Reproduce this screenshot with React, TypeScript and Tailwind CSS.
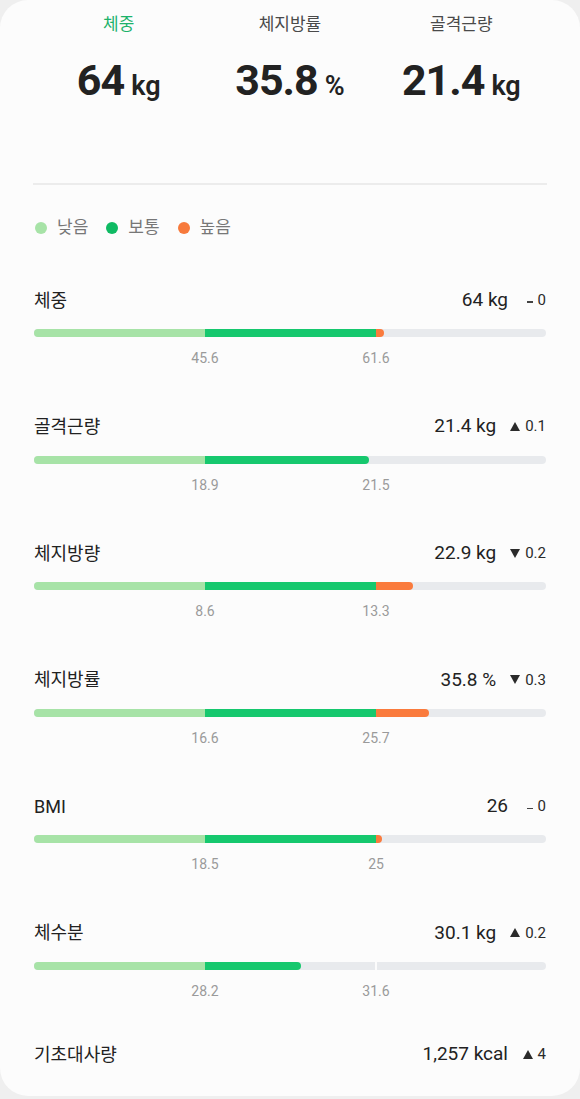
interface Metric {
  label: string
  value: string
  trend: 'up' | 'down' | 'flat'
  delta: string
  low: string
  high: string
  green?: number
  orange?: number
  split?: boolean
}

const metrics: Metric[] = [
  { label: '체중', value: '64 kg', trend: 'flat', delta: '0', low: '45.6', high: '61.6', green: 171, orange: 8 },
  { label: '골격근량', value: '21.4 kg', trend: 'up', delta: '0.1', low: '18.9', high: '21.5', green: 164 },
  { label: '체지방량', value: '22.9 kg', trend: 'down', delta: '0.2', low: '8.6', high: '13.3', green: 171, orange: 37 },
  { label: '체지방률', value: '35.8 %', trend: 'down', delta: '0.3', low: '16.6', high: '25.7', green: 171, orange: 53 },
  { label: 'BMI', value: '26', trend: 'flat', delta: '0', low: '18.5', high: '25', green: 171, orange: 6 },
  { label: '체수분', value: '30.1 kg', trend: 'up', delta: '0.2', low: '28.2', high: '31.6', green: 96, split: true },
]

const font = { fontFamily: "Roboto, 'Noto Sans CJK KR', sans-serif" }

function Delta({ trend, delta }: { trend: Metric['trend']; delta: string }) {
  return (
    <span className="flex items-center gap-[5px] text-[15px] text-[#2a2a2a] min-w-[24px] justify-end">
      {trend === 'flat' && <span className="block w-[6px] h-[1.5px] bg-[#444] mt-[4px]" />}
      {trend === 'up' && (
        <svg width="10" height="9" viewBox="0 0 10 9">
          <path d="M5 0 L10 9 L0 9 Z" fill="#2a2a2a" />
        </svg>
      )}
      {trend === 'down' && (
        <svg width="10" height="9" viewBox="0 0 10 9">
          <path d="M0 0 L10 0 L5 9 Z" fill="#2a2a2a" />
        </svg>
      )}
      <span>{delta}</span>
    </span>
  )
}

function MetricRow({ m }: { m: Metric }) {
  const last = m.orange ? 'orange' : 'green'
  return (
    <div className="mb-[44.6px]">
      <div className="flex items-center justify-between h-[28px]">
        <span className="text-[18px] text-[#222]">{m.label}</span>
        <span className="flex items-center gap-[14px]">
          <span className="text-[19px] text-[#222]">{m.value}</span>
          <Delta trend={m.trend} delta={m.delta} />
        </span>
      </div>

      {/* bar */}
      <div className="relative mt-[15px] h-[8px] w-[512px] rounded-full bg-[#e8eaed] overflow-hidden">
        {m.split && <div className="absolute top-0 left-[341px] h-full w-[2px] bg-[#fcfcfc]" />}
        <div className="relative flex h-full">
          <div className="h-full w-[171px] bg-[#a7e3a7]" />
          <div
            className={`h-full bg-[#16c86e] ${last === 'green' ? 'rounded-r-full' : ''}`}
            style={{ width: m.green }}
          />
          {m.orange && (
            <div className="h-full rounded-r-full bg-[#fa7b3d]" style={{ width: m.orange }} />
          )}
        </div>
      </div>

      <div className="relative mt-[11px] h-[20px] w-[512px] text-[14px] text-[#9a9a9a]">
        <span className="absolute left-[171px] -translate-x-1/2 leading-[20px]">{m.low}</span>
        <span className="absolute left-[342px] -translate-x-1/2 leading-[20px]">{m.high}</span>
      </div>
    </div>
  )
}

export default function App() {
  return (
    <div className="min-h-[1099px] bg-[#efefef]" style={font}>
      <div className="min-h-[1096px] rounded-[28px] bg-[#fcfcfc] px-[34px]">
        {/* Summary */}
        <div className="grid grid-cols-3 pt-[12px] -mx-[1px]">
          {[
            { tab: '체중', num: '64', unit: 'kg', active: true },
            { tab: '체지방률', num: '35.8', unit: '%' },
            { tab: '골격근량', num: '21.4', unit: 'kg' },
          ].map((s) => (
            <div key={s.tab} className="flex flex-col items-center">
              <span className={`h-[24px] leading-[24px] text-[17px] ${s.active ? 'text-[#1db26b]' : 'text-[#4a4a4a]'}`}>
                {s.tab}
              </span>
              <span className="mt-[20px] flex items-baseline gap-[7px] text-[#222] leading-[48px]">
                <span className="text-[43px] font-bold tracking-[-1px]">{s.num}</span>
                <span className="text-[27px] font-semibold">{s.unit}</span>
              </span>
            </div>
          ))}
        </div>

        <div className="mt-[73px] h-[2px] bg-[#ececec] -mx-[1px]" />

        {/* Legend */}
        <div className="mt-[31px] flex items-center h-[24px] text-[17px] text-[#777]">
          <span className="w-[12px] h-[12px] rounded-full bg-[#a7e3a7] ml-[1px]" />
          <span className="ml-[10px]">낮음</span>
          <span className="w-[12px] h-[12px] rounded-full bg-[#0fba63] ml-[18px]" />
          <span className="ml-[10px]">보통</span>
          <span className="w-[12px] h-[12px] rounded-full bg-[#f77a3c] ml-[18px]" />
          <span className="ml-[10px]">높음</span>
        </div>

        <div className="mt-[46px]">
          {metrics.map((m) => (
            <MetricRow key={m.label} m={m} />
          ))}
          <div className="flex items-center justify-between h-[28px] -mt-[5px]">
            <span className="text-[18px] text-[#222]">기초대사량</span>
            <span className="flex items-center gap-[14px]">
              <span className="text-[19px] text-[#222]">1,257 kcal</span>
              <Delta trend="up" delta="4" />
            </span>
          </div>
        </div>
      </div>
    </div>
  )
}
